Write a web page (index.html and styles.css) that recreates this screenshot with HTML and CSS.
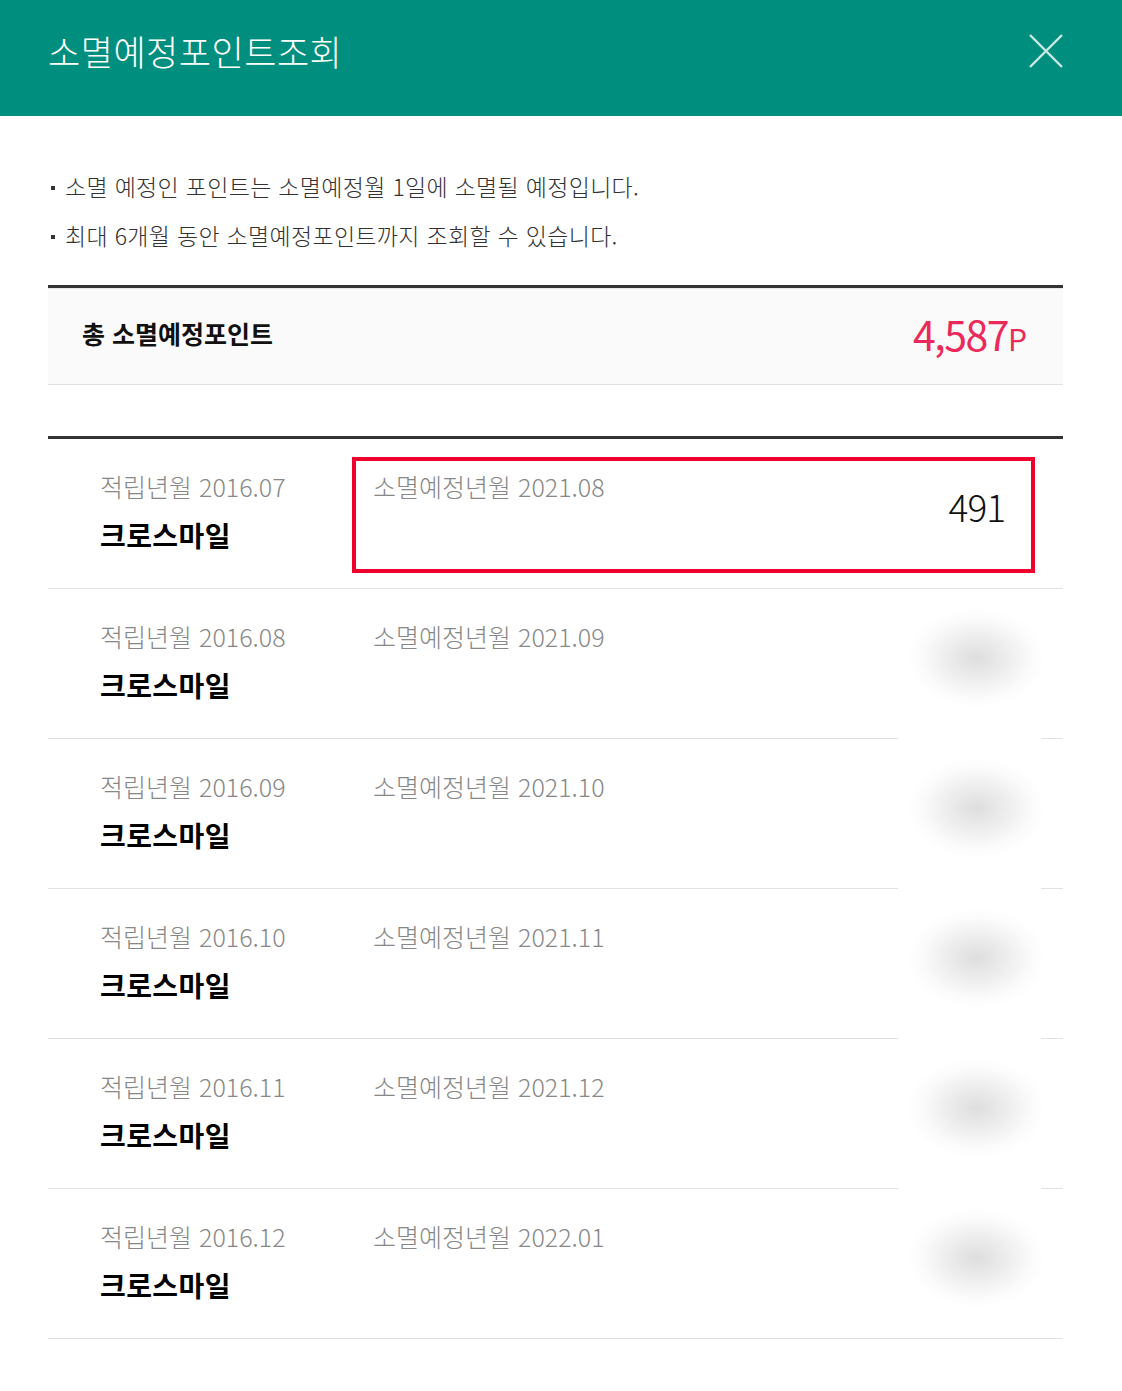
FILE: index.html
```
<!DOCTYPE html>
<html lang="ko">
<head>
    <meta charset="UTF-8">
    <meta name="viewport" content="width=device-width, initial-scale=1.0">
    <title>소멸예정포인트조회</title>
    <link rel="stylesheet" href="styles.css">
</head>
<body>
  <div class="popup">
    <header class="popup-head">
      <h1>소멸예정포인트조회</h1>
      <button type="button" class="close" aria-label="닫기">
        <svg width="34" height="34" viewBox="0 0 34 34">
          <path d="M1 1 L33 33 M33 1 L1 33" stroke="currentColor" stroke-width="2.4" fill="none"/>
        </svg>
      </button>
    </header>

    <div class="popup-body">
      <ul class="notice">
        <li>소멸 예정인 포인트는 소멸예정월 1일에 소멸될 예정입니다.</li>
        <li>최대 6개월 동안 소멸예정포인트까지 조회할 수 있습니다.</li>
      </ul>

      <div class="total">
        <strong>총 소멸예정포인트</strong>
        <span class="total-num">4,587<em>P</em></span>
      </div>

      <div class="history">
        <div class="row">
          <div class="col-save">
            <span class="label">적립년월 2016.07</span>
            <span class="name">크로스마일</span>
          </div>
          <span class="label">소멸예정년월 2021.08</span>
          <span class="point">491</span>
        </div>
        <div class="row">
          <div class="col-save">
            <span class="label">적립년월 2016.08</span>
            <span class="name">크로스마일</span>
          </div>
          <span class="label">소멸예정년월 2021.09</span>
          <span class="point"></span>
        </div>
        <div class="row">
          <div class="col-save">
            <span class="label">적립년월 2016.09</span>
            <span class="name">크로스마일</span>
          </div>
          <span class="label">소멸예정년월 2021.10</span>
          <span class="point"></span>
        </div>
        <div class="row">
          <div class="col-save">
            <span class="label">적립년월 2016.10</span>
            <span class="name">크로스마일</span>
          </div>
          <span class="label">소멸예정년월 2021.11</span>
          <span class="point"></span>
        </div>
        <div class="row">
          <div class="col-save">
            <span class="label">적립년월 2016.11</span>
            <span class="name">크로스마일</span>
          </div>
          <span class="label">소멸예정년월 2021.12</span>
          <span class="point"></span>
        </div>
        <div class="row">
          <div class="col-save">
            <span class="label">적립년월 2016.12</span>
            <span class="name">크로스마일</span>
          </div>
          <span class="label">소멸예정년월 2022.01</span>
          <span class="point"></span>
        </div>

        <!-- 가려진 금액 -->
        <div class="mask"></div>
        <!-- 강조 표시 -->
        <div class="highlight"></div>
      </div>
    </div>
  </div>
</body>
</html>
```

FILE: styles.css
```
* {
  margin: 0;
  padding: 0;
  box-sizing: border-box;
}
html, body {
  background: #fff;
  font-family: "Noto Sans CJK KR", "Noto Sans", sans-serif;
  color: #333;
}
ul {
  list-style: none;
}

.popup-head {
  height: 116px;
  background: #008f7e;
  display: flex;
  justify-content: space-between;
  align-items: flex-start;
  padding: 30px 59px 0 48px;
}
.popup-head h1 {
  font-size: 35px;
  line-height: 42px;
  font-weight: 300;
  color: #fff;
  letter-spacing: 0.5px;
}
.close {
  border: none;
  background: none;
  color: rgba(255, 255, 255, 0.8);
  width: 34px;
  height: 34px;
  margin-top: 4px;
}
.close svg {
  display: block;
}

.popup-body {
  padding: 0 59px 60px 48px;
}

.notice {
  margin-top: 46px;
}
.notice li {
  position: relative;
  padding-left: 17px;
  font-size: 23px;
  line-height: 49px;
  font-weight: 300;
  color: #333;
  letter-spacing: 0.3px;
}
.notice li::before {
  content: "";
  position: absolute;
  left: 3px;
  top: 24px;
  width: 4px;
  height: 4px;
  background: #333;
}

.total {
  margin-top: 25px;
  border-top: 3px solid #333;
  border-bottom: 1px solid #e0e0e0;
  background: #fafafa;
  box-shadow: inset 0 1px 0 #e8e8e8;
  height: 100px;
  display: flex;
  justify-content: space-between;
  align-items: center;
  padding: 0 36px 6px 34px;
}
.total strong {
  font-size: 25px;
  font-weight: 700;
  color: #111;
  letter-spacing: 0;
}
.total-num {
  font-size: 41px;
  color: #ea2a5b;
  letter-spacing: -1.5px;
}
.total-num em {
  font-style: normal;
  font-size: 30px;
  letter-spacing: 0;
}

.history {
  position: relative;
  margin-top: 51px;
  border-top: 3px solid #333;
}
.row {
  display: grid;
  grid-template-columns: 273px 1fr auto;
  height: 150px;
  padding: 30px 58px 0 52px;
  border-bottom: 1px solid #e2e2e2;
}
.col-save {
  display: flex;
  flex-direction: column;
  gap: 15px;
}
.label {
  font-size: 25px;
  line-height: 34px;
  font-weight: 300;
  color: #888;
  letter-spacing: 0;
}
.name {
  font-size: 28px;
  line-height: 34px;
  font-weight: 700;
  color: #000;
  letter-spacing: 0.4px;
}
.point {
  margin-top: 17px;
  font-size: 37px;
  line-height: 40px;
  font-weight: 300;
  color: #111;
  letter-spacing: -1px;
}

.mask {
  position: absolute;
  left: 850px;
  top: 166px;
  width: 143px;
  height: 712px;
  background-color: #fff;
  background-image: radial-gradient(ellipse 70px 50px at 55% 50%, #dedede 0%, #ececec 40%, #fbfbfb 80%, #fff 100%);
  background-size: 143px 150px;
  background-position: 0 -22px;
  background-repeat: repeat-y;
}
.highlight {
  position: absolute;
  left: 304px;
  top: 18px;
  width: 683px;
  height: 116px;
  border: 4px solid #f0002d;
}
```
